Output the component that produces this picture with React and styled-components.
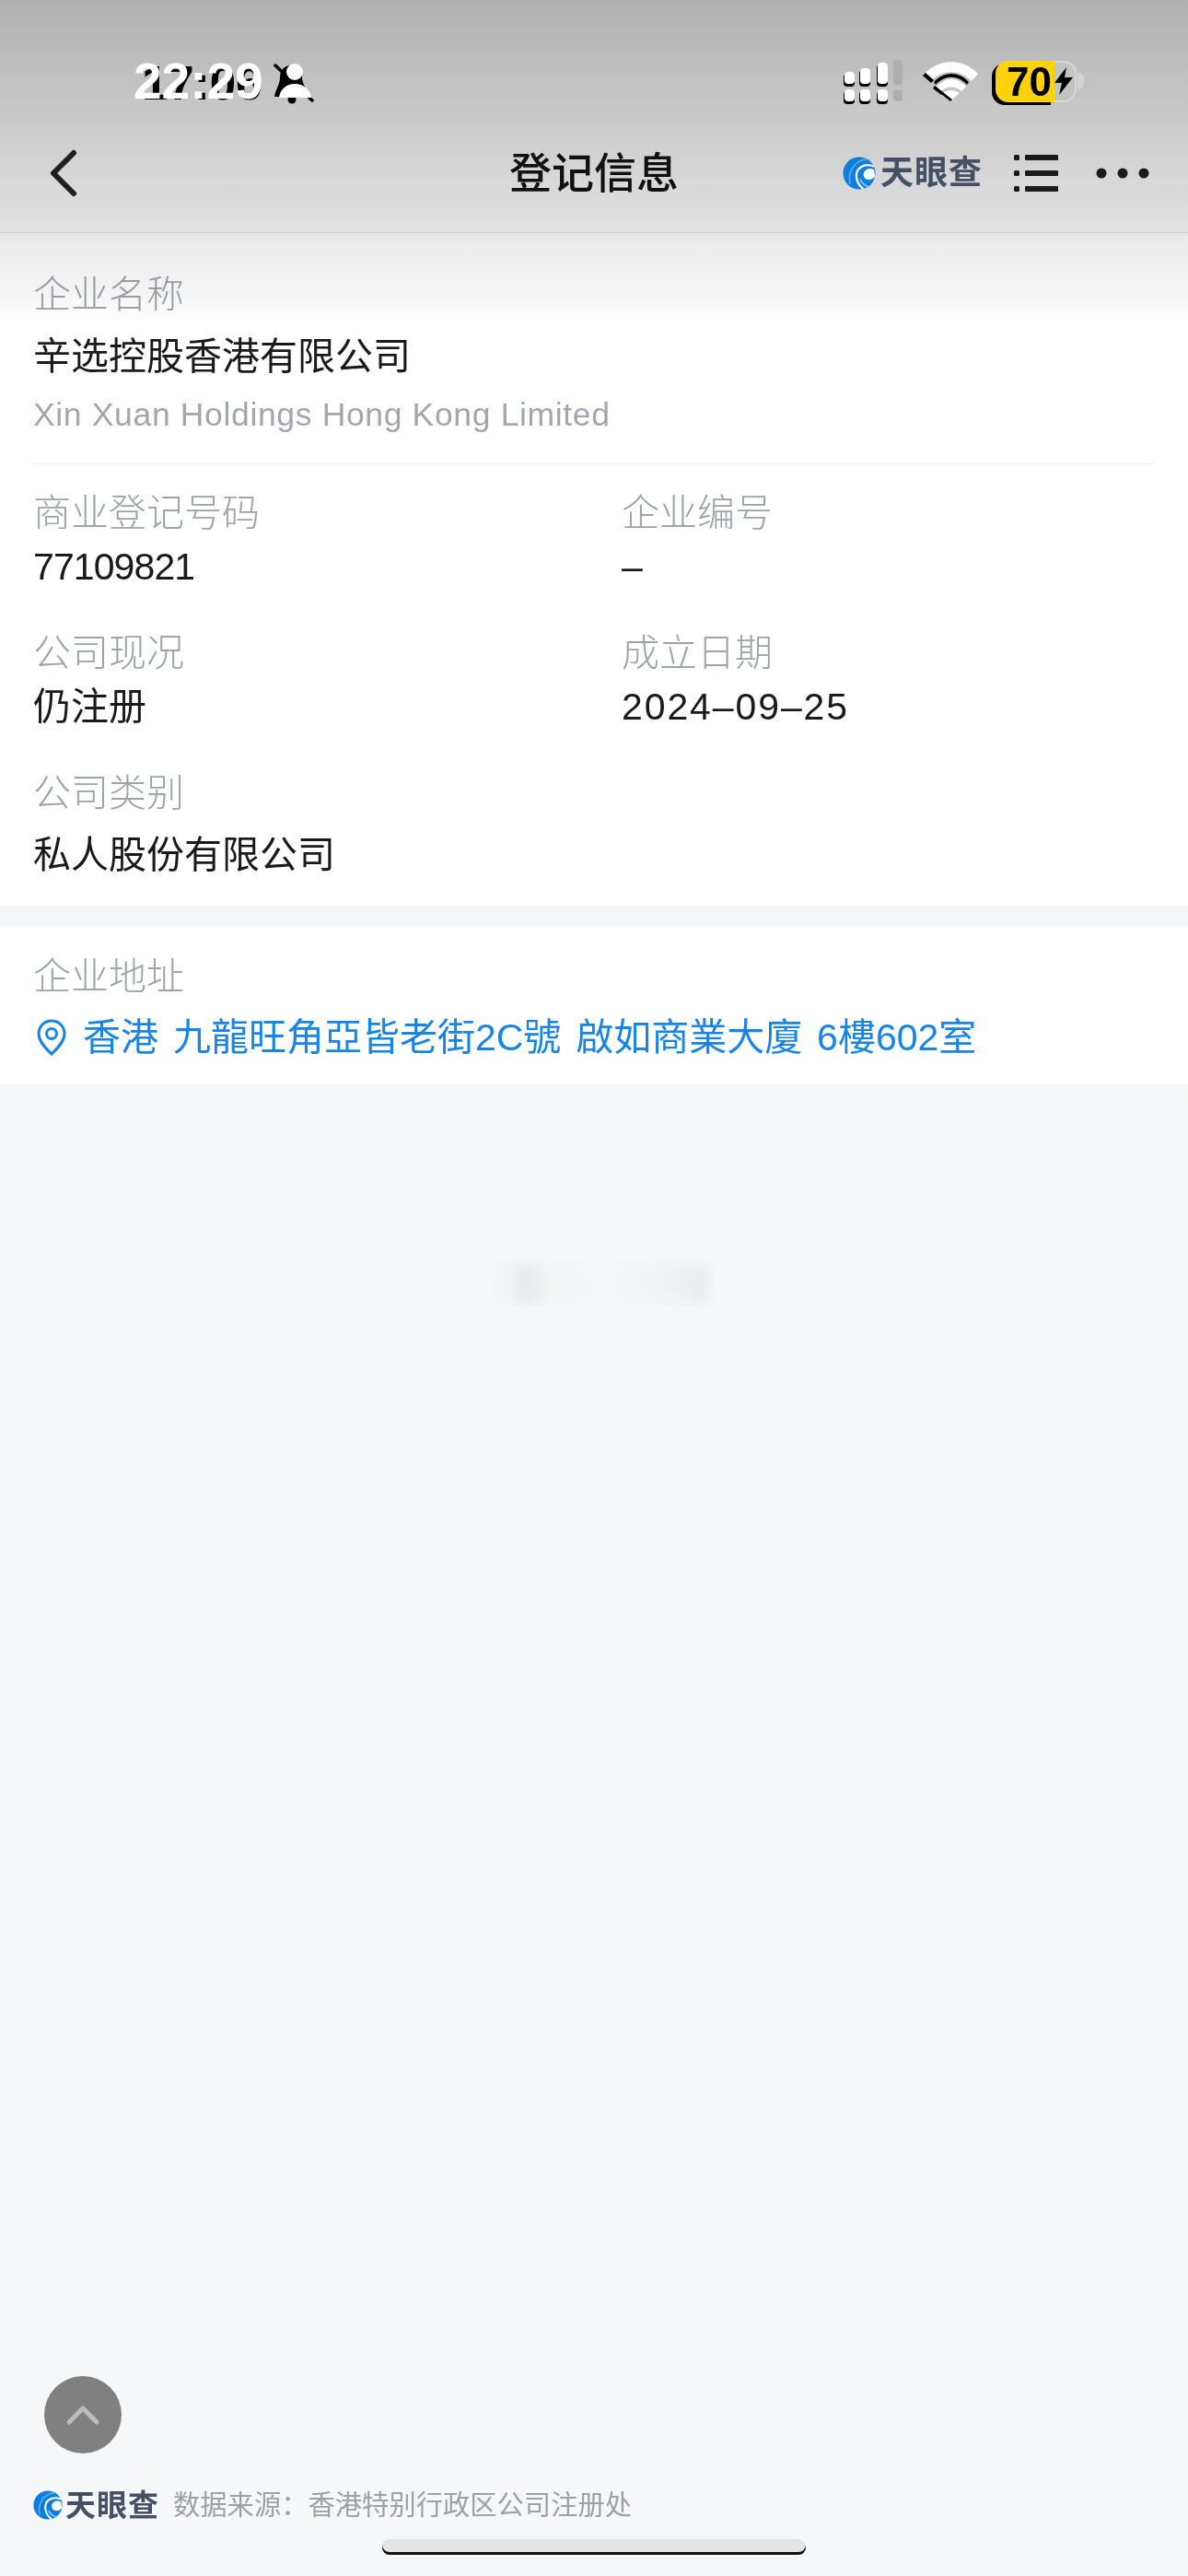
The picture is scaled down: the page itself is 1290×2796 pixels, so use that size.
import styled, { createGlobalStyle } from "styled-components";

const GlobalStyle = createGlobalStyle`
  html, body {
    margin: 0;
    padding: 0;
    background: #fff;
  }
  * {
    box-sizing: border-box;
  }
`;

const SANS = `"Liberation Sans", "Noto Sans CJK SC", sans-serif`;

const Page = styled.div`
  position: relative;
  width: 1290px;
  height: 2796px;
  overflow: hidden;
  display: flex;
  flex-direction: column;
  background: #fff;
  font-family: ${SANS};
`;

/* grey shade hanging from the top of the screen, sits over the first card */
const TopShade = styled.div`
  position: absolute;
  top: 0;
  left: 0;
  right: 0;
  height: 350px;
  z-index: 1;
  mix-blend-mode: multiply;
  pointer-events: none;
  background: linear-gradient(
    180deg,
    #b0b0b0 0,
    #c4c4c4 100px,
    #d6d6d6 190px,
    #e2e2e2 250px,
    #ececec 262px,
    #f5f5f5 320px,
    #ffffff 350px
  );
`;

const Header = styled.header`
  position: relative;
  z-index: 2;
  height: 253px;
  flex: none;
  border-bottom: 1px solid #cfcfcf;
`;

const StatusBar = styled.div`
  display: flex;
  align-items: center;
  height: 52px;
  margin-top: 62px;
  padding: 0 113px 0 145px;
`;

const TimeStack = styled.div`
  position: relative;
  width: 142px;
  height: 52px;
  line-height: 52px;
  font-size: 55px;
  font-weight: 700;
  color: #fff;
  white-space: nowrap;
`;

const TimeGhost = styled.span`
  position: absolute;
  left: 9px;
  top: 3px;
  font-size: 51px;
  color: #000;
`;

const TimeFront = styled.span`
  position: relative;
`;

const BellIcon = styled.svg`
  width: 44px;
  height: 50px;
  margin-left: 10px;
  flex: none;
`;

const StatusIcons = styled.div`
  display: flex;
  align-items: center;
  margin-left: auto;
`;

const SignalIcon = styled.svg`
  width: 70px;
  height: 52px;
  flex: none;
`;

const WifiIcon = styled.svg`
  width: 62px;
  height: 44px;
  margin-left: 19px;
  flex: none;
`;

const Battery = styled.div`
  display: flex;
  align-items: center;
  margin-left: 17px;
`;

const BatteryBody = styled.div`
  display: flex;
  align-items: center;
  width: 88px;
  height: 45px;
  border-radius: 14px;
  background: #c3c3c3;
  box-shadow: inset 0 0 0 2px #d8d8d8;
`;

const BatteryFill = styled.div`
  width: 64px;
  height: 100%;
  border-radius: 14px 0 0 14px;
  background: #fcd20d;
  box-shadow: -4px 3px 0 #000;
  color: #000;
  font-size: 44px;
  font-weight: 700;
  line-height: 45px;
  text-align: right;
  padding-right: 3px;
`;

const BoltIcon = styled.svg`
  width: 20px;
  height: 30px;
  flex: none;
`;

const BatteryNub = styled.div`
  width: 7px;
  height: 18px;
  margin-left: 1px;
  border-radius: 0 6px 6px 0;
  background: #d4d4d4;
`;

const NavBar = styled.nav`
  position: relative;
  display: flex;
  align-items: center;
  height: 60px;
  margin-top: 44px;
  padding: 0 42px 0 50px;
`;

const BackIcon = styled.svg`
  width: 40px;
  height: 52px;
  flex: none;
`;

const Title = styled.h1`
  position: absolute;
  left: 0;
  right: 0;
  margin: 0;
  text-align: center;
  font-size: 46px;
  font-weight: 500;
  line-height: 60px;
  color: #111;
`;

const NavActions = styled.div`
  display: flex;
  align-items: center;
  margin-left: auto;
`;

const LogoWrap = styled.div`
  display: flex;
  align-items: center;
  gap: ${(p) => p.$gap}px;
  flex: none;
`;

const LogoMark = styled.svg`
  width: ${(p) => p.$size}px;
  height: ${(p) => p.$size}px;
  flex: none;
`;

const LogoText = styled.span`
  font-size: ${(p) => p.$size}px;
  line-height: 1;
  font-weight: 700;
  letter-spacing: 1px;
  color: #465064;
  white-space: nowrap;
`;

const MenuIcon = styled.svg`
  width: 48px;
  height: 42px;
  margin-left: 34px;
  flex: none;
`;

const DotsIcon = styled.svg`
  width: 58px;
  height: 12px;
  margin-left: 41px;
  flex: none;
`;

const Body = styled.main`
  flex: 1;
  display: flex;
  flex-direction: column;
  background: #f6f7f9;
`;

const Card = styled.section`
  flex: none;
  background: #fff;
  padding: ${(p) => p.$padding};
  margin-top: ${(p) => p.$top || 0}px;
`;

const Label = styled.div`
  font-size: 41px;
  line-height: 60px;
  color: #9ea3a9;
  font-weight: 300;
`;

const Value = styled.div`
  font-size: 41px;
  line-height: 60px;
  color: #1a1a1a;
  margin-top: ${(p) => p.$gap || 0}px;
  letter-spacing: ${(p) => p.$spacing || 0}px;
`;

const EnglishName = styled.div`
  font-size: 35.5px;
  line-height: 50px;
  margin-top: 8px;
  letter-spacing: 0.65px;
  color: #a2a7ad;
`;

const Divider = styled.div`
  height: 1px;
  margin-top: 28px;
  background: #efefef;
`;

const FieldGrid = styled.div`
  display: grid;
  grid-template-columns: 639px 1fr;
  row-gap: 34px;
  margin-top: 23px;
`;

const AddressRow = styled.div`
  display: flex;
  align-items: center;
  gap: 17px;
  margin-top: 6px;
`;

const PinIcon = styled.svg`
  width: 34px;
  height: 40px;
  margin-left: 3px;
  flex: none;
`;

const AddressText = styled.div`
  font-size: 41px;
  line-height: 60px;
  word-spacing: 4.5px;
  color: #1a84e6;
  white-space: nowrap;
`;

const Rest = styled.div`
  flex: 1;
  display: flex;
  flex-direction: column;
  padding: 0 36px;
`;

const BlurSmudge = styled.div`
  width: 250px;
  height: 44px;
  margin: 194px 0 0 486px;
  filter: blur(6px);
  background: linear-gradient(
    90deg,
    #f6f7f9 0,
    #f1f2f4 12%,
    #e2e3e6 20%,
    #f2f3f5 30%,
    #f5f6f8 55%,
    #eceef0 85%,
    #e6e7ea 98%,
    #f6f7f9 100%
  );
  opacity: 0.7;
`;

const ScrollTop = styled.div`
  width: 84px;
  height: 84px;
  margin: auto 0 0 12px;
  border-radius: 50%;
  background: #808080;
  display: flex;
  align-items: center;
  justify-content: center;
`;

const ScrollIcon = styled.svg`
  width: 38px;
  height: 24px;
`;

const Footer = styled.footer`
  display: flex;
  align-items: center;
  gap: 15px;
  height: 34px;
  margin-top: 39px;
`;

const SourceText = styled.span`
  font-size: 29.3px;
  line-height: 34px;
  color: #9ca1a8;
  white-space: nowrap;
`;

const HomeBar = styled.div`
  width: 460px;
  height: 17px;
  margin: 20px 0 23px 379px;
  border-radius: 8px;
  background: #e4e4e4;
  box-shadow: inset 0 -3px 0 #111;
`;

function Logo({ mark, text, gap }) {
  return (
    <LogoWrap $gap={gap}>
      <LogoMark $size={mark} viewBox="0 0 40 40">
        <circle cx="20" cy="20" r="19.5" fill="#0f7ddc" />
        <path d="M30 3C14 5 6 17 9 33" fill="none" stroke="#5aaceb" strokeWidth="2" />
        <path d="M38 12C26 7 14 14 17 27c1 5 4 9 8 12" fill="none" stroke="#fff" strokeWidth="2.5" />
        <path d="M39 24c-3 4-9 5-12 2-3-3-2-8 1-10 3-2 7-2 10 0" fill="#fff" />
        <path d="M32 37c-5-2-9-5-11-10" fill="none" stroke="#8cc6f2" strokeWidth="2" />
      </LogoMark>
      <LogoText $size={text}>天眼查</LogoText>
    </LogoWrap>
  );
}

function SignalBars() {
  const bars = [
    { x: 4, top: 16 },
    { x: 21, top: 12 },
    { x: 40, top: 6 },
  ];
  return (
    <SignalIcon viewBox="0 0 70 52">
      {bars.map((b) => (
        <g key={b.x}>
          <rect x={b.x - 1} y={b.top + 2} width="12" height={30 - b.top} rx="4" fill="#000" />
          <rect x={b.x - 1} y="37" width="12" height="14" rx="4" fill="#000" />
          <rect x={b.x} y={b.top} width="11" height={29 - b.top} rx="4" fill="#fff" />
          <rect x={b.x} y="35" width="11" height="13" rx="4" fill="#fff" />
        </g>
      ))}
      <rect x="57" y="3" width="10" height="27" rx="4" fill="#aeaeae" />
      <rect x="57" y="35" width="10" height="13" rx="4" fill="#aeaeae" />
    </SignalIcon>
  );
}

function Wifi() {
  return (
    <WifiIcon viewBox="0 0 62 44">
      <path d="M2 14C18 -3 44 -3 60 14l-7 8C41 9 21 9 9 22z" fill="#fff" />
      <path d="M0 16l9 8 3-3-9-8z" fill="#000" />
      <path d="M12 23C23 11 39 11 50 23l-2 3C38 15 24 15 14 26z" fill="#000" />
      <path d="M15 28C25 17 37 17 47 28l-5 5c-6-6-16-6-22 0z" fill="#fff" />
      <path d="M11 30l9 7 2-3-9-7z" fill="#000" />
      <path d="M22 35c5-4 12-4 18 0l-9 8z" fill="#fff" />
      <path d="M20 36l10 8 2-2-10-8z" fill="#000" />
    </WifiIcon>
  );
}

export default function App() {
  return (
    <Page>
      <GlobalStyle />
      <TopShade />
      <Header>
        <StatusBar>
          <TimeStack>
            <TimeGhost>17:06</TimeGhost>
            <TimeFront>22:29</TimeFront>
          </TimeStack>
          <BellIcon viewBox="0 0 44 50">
            <path d="M19 8c7 0 12 5 12 13 0 8 6 13 7 21H1c1-8 6-13 6-21C7 13 12 8 19 8z" fill="#000" />
            <circle cx="20" cy="45" r="4.5" fill="#000" />
            <path d="M2 8l40 38" stroke="#000" strokeWidth="3.5" strokeLinecap="round" />
            <circle cx="23" cy="15" r="9" fill="#fff" />
            <path d="M6 43c1-9 8-15 17-15s17 6 18 15z" fill="#fff" />
          </BellIcon>
          <StatusIcons>
            <SignalBars />
            <Wifi />
            <Battery>
              <BatteryBody>
                <BatteryFill>70</BatteryFill>
                <BoltIcon viewBox="0 0 20 30">
                  <path d="M13 0L0 17h8l-3 13 15-19h-9z" fill="#000" />
                </BoltIcon>
              </BatteryBody>
              <BatteryNub />
            </Battery>
          </StatusIcons>
        </StatusBar>
        <NavBar>
          <BackIcon viewBox="0 0 40 52">
            <path d="M30 4L8 26l22 22" fill="none" stroke="#1f1f1f" strokeWidth="6" strokeLinecap="round" strokeLinejoin="round" />
          </BackIcon>
          <Title>登记信息</Title>
          <NavActions>
            <Logo mark={36} text={36} gap={5} />
            <MenuIcon viewBox="0 0 48 42">
              <rect x="0" y="1" width="6" height="6" rx="1.5" fill="#1a1a1a" />
              <rect x="0" y="18" width="6" height="6" rx="1.5" fill="#1a1a1a" />
              <rect x="0" y="35" width="6" height="6" rx="1.5" fill="#1a1a1a" />
              <rect x="12" y="1" width="36" height="6" rx="1" fill="#1a1a1a" />
              <rect x="12" y="18" width="36" height="6" rx="1" fill="#1a1a1a" />
              <rect x="12" y="35" width="36" height="6" rx="1" fill="#1a1a1a" />
            </MenuIcon>
            <DotsIcon viewBox="0 0 58 12">
              <circle cx="6" cy="6" r="5.5" fill="#1a1a1a" />
              <circle cx="29" cy="6" r="5.5" fill="#1a1a1a" />
              <circle cx="52" cy="6" r="5.5" fill="#1a1a1a" />
            </DotsIcon>
          </NavActions>
        </NavBar>
      </Header>

      <Body>
        <Card $padding="37px 36px 25px">
          <Label>企业名称</Label>
          <Value $gap={7}>辛选控股香港有限公司</Value>
          <EnglishName>Xin Xuan Holdings Hong Kong Limited</EnglishName>
          <Divider />
          <FieldGrid>
            <div>
              <Label>商业登记号码</Label>
              <Value $gap={-2} $spacing={-0.9}>77109821</Value>
            </div>
            <div>
              <Label>企业编号</Label>
              <Value $gap={-2}>–</Value>
            </div>
            <div>
              <Label>公司现况</Label>
              <Value $gap={-2}>仍注册</Value>
            </div>
            <div>
              <Label>成立日期</Label>
              <Value $gap={-2} $spacing={1.9}>2024–09–25</Value>
            </div>
            <div>
              <Label>公司类别</Label>
              <Value $gap={7}>私人股份有限公司</Value>
            </div>
          </FieldGrid>
        </Card>

        <Card $top={23} $padding="24px 36px 21px">
          <Label>企业地址</Label>
          <AddressRow>
            <PinIcon viewBox="0 0 34 40">
              <path
                d="M17 2C9 2 3 8 3 16c0 9 9 17 14 22 5-5 14-13 14-22 0-8-6-14-14-14z"
                fill="none"
                stroke="#1a84e6"
                strokeWidth="3"
              />
              <circle cx="17" cy="16" r="5.5" fill="none" stroke="#1a84e6" strokeWidth="3" />
            </PinIcon>
            <AddressText>香港 九龍旺角亞皆老街2C號 啟如商業大廈 6樓602室</AddressText>
          </AddressRow>
        </Card>

        <Rest>
          <BlurSmudge />
          <ScrollTop>
            <ScrollIcon viewBox="0 0 38 24">
              <path d="M4 20L19 5l15 15" fill="none" stroke="#bdbdbd" strokeWidth="5" strokeLinecap="round" strokeLinejoin="round" />
            </ScrollIcon>
          </ScrollTop>
          <Footer>
            <Logo mark={32} text={33} gap={3} />
            <SourceText>数据来源：香港特别行政区公司注册处</SourceText>
          </Footer>
          <HomeBar />
        </Rest>
      </Body>
    </Page>
  );
}
